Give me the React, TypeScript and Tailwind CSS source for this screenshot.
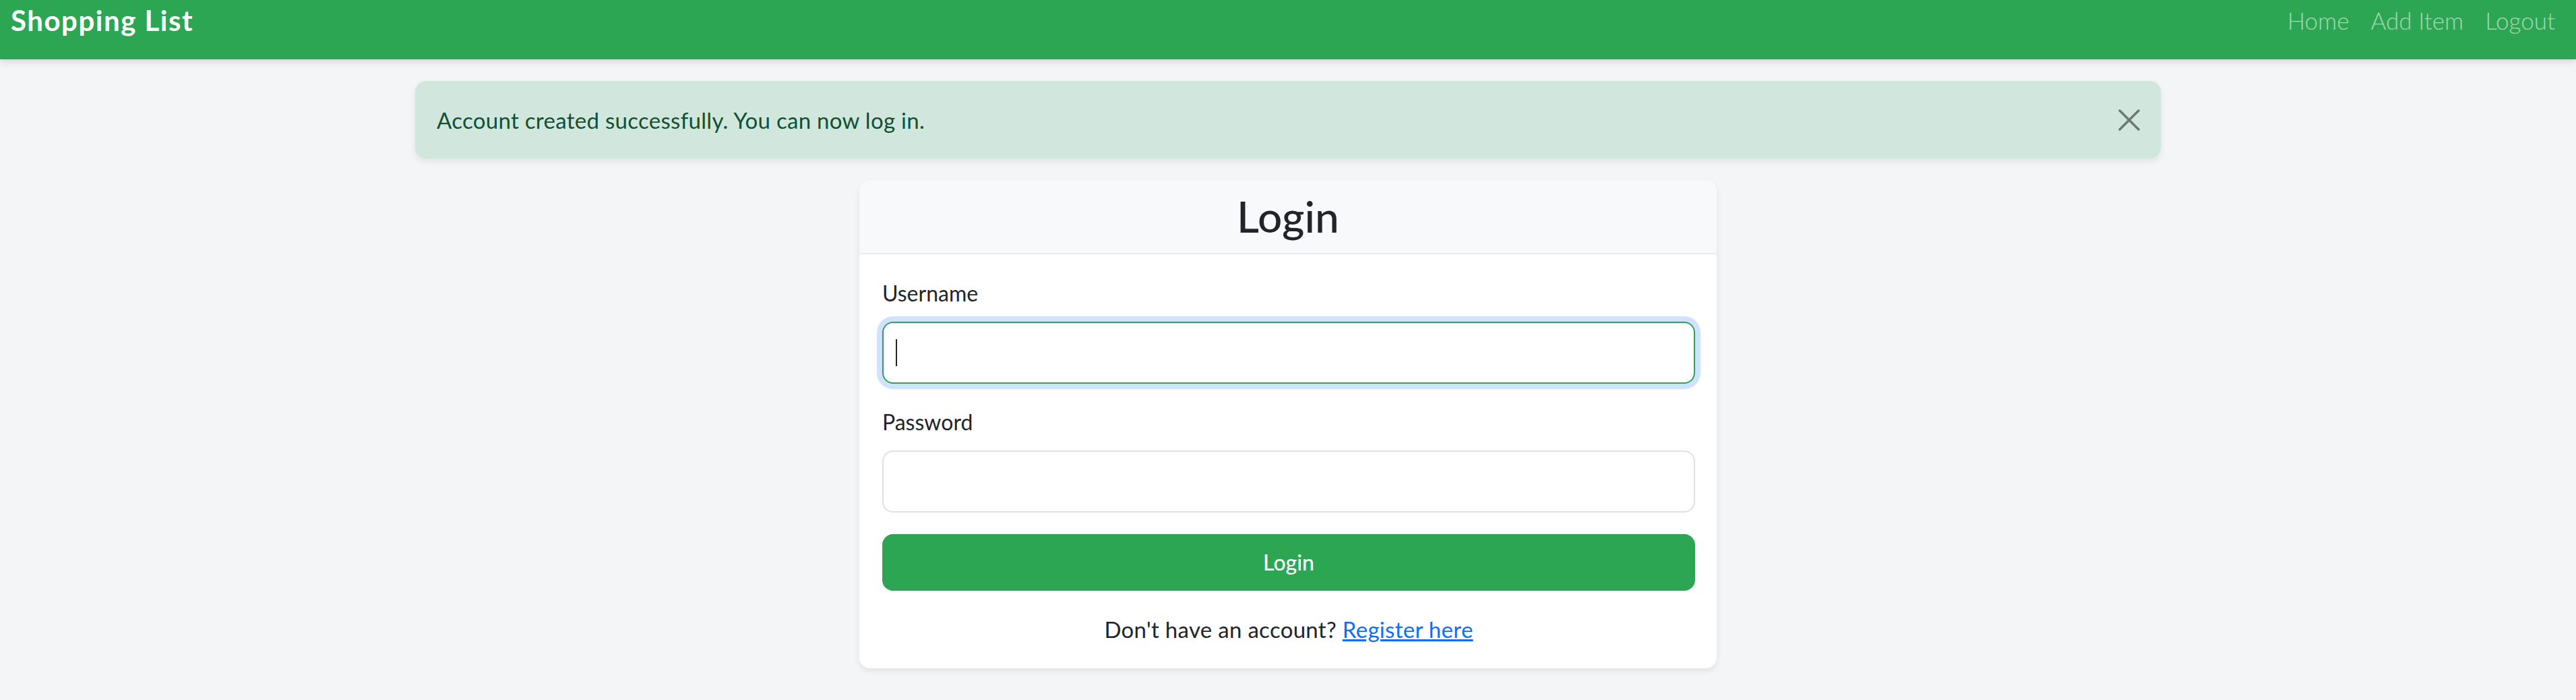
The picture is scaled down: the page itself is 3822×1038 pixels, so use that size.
const font = { fontFamily: 'Lato, "Open Sans", "Noto Sans", sans-serif' };

const CloseIcon = () => (
  <svg width="32" height="32" viewBox="0 0 32 32" fill="none" stroke="#6b7b70" strokeWidth="3.5" strokeLinecap="round">
    <line x1="2" y1="2" x2="30" y2="30" />
    <line x1="30" y1="2" x2="2" y2="30" />
  </svg>
);

const Navbar = () => (
  <nav className="h-[88px] bg-[#2ca652] shadow-[0_4px_10px_rgba(0,0,0,0.12)]">
    <div className="flex h-[60px] items-center justify-between pl-[16px] pr-[15px]">
      <a href="#" className="text-[42px] leading-[60px] font-bold tracking-[1.5px] text-white">
        Shopping List
      </a>
      <div className="flex items-center">
        {['Home', 'Add Item', 'Logout'].map((item) => (
          <a key={item} href="#" className="px-[16px] text-[35px] leading-[48px] font-light text-white/55">
            {item}
          </a>
        ))}
      </div>
    </div>
  </nav>
);

const App = () => {
  return (
    <div className="min-h-screen bg-[#f4f5f7] text-[#212529]" style={font}>
      <Navbar />
      <main className="mx-auto w-[2590px]">
        {/* flash message */}
        <div className="mt-[32px] flex h-[115px] items-center justify-between rounded-[16px] bg-[#d1e7dd] pl-[32px] pr-[31px] text-[#0f5132] shadow-[0_4px_10px_rgba(0,0,0,0.08)]">
          <span className="text-[33px] leading-[48px] tracking-[0.3px]">Account created successfully. You can now log in.</span>
          <button type="button" aria-label="Close" className="flex h-[32px] w-[32px] items-center justify-center">
            <CloseIcon />
          </button>
        </div>

        {/* login card */}
        <div className="mx-auto mt-[32px] w-[1272px] overflow-hidden rounded-[16px] bg-white shadow-[0_4px_10px_rgba(0,0,0,0.08)]">
          <div className="flex h-[110px] items-center justify-center border-b-2 border-[#e9ecef] bg-[#f8f9fa]">
            <h2 className="text-[64px] leading-[76px] font-medium text-[#212529]">Login</h2>
          </div>
          <form className="flex flex-col pl-[34px] pr-[32px] pt-[34px] pb-[34px]">
            <label className="mb-[18px] text-[32px] leading-[48px]">Username</label>
            <div className="relative">
              <input
                type="text"
                className="h-[92px] w-full rounded-[16px] border-2 border-[#2ca652] bg-white px-[20px] text-[32px] outline-none shadow-[0_0_0_8px_rgba(13,110,253,0.2)]"
              />
              <span className="absolute left-[20px] top-[26px] h-[40px] w-[2px] bg-[#212529]" />
            </div>

            <label className="mt-[33px] mb-[18px] text-[32px] leading-[48px]">Password</label>
            <input
              type="password"
              className="h-[92px] w-full rounded-[16px] border-2 border-[#dee2e6] bg-white px-[20px] text-[32px] outline-none"
            />

            <button
              type="button"
              className="mt-[32px] h-[84px] w-full rounded-[16px] bg-[#2ca652] text-[32px] font-medium text-white"
            >
              Login
            </button>

            <p className="mt-[33px] text-center text-[33px] leading-[48px] tracking-[0.3px]">
              Don't have an account?{' '}
              <a href="#" className="text-[#0d6efd] underline">
                Register here
              </a>
            </p>
          </form>
        </div>
      </main>
    </div>
  );
};

export default App;
